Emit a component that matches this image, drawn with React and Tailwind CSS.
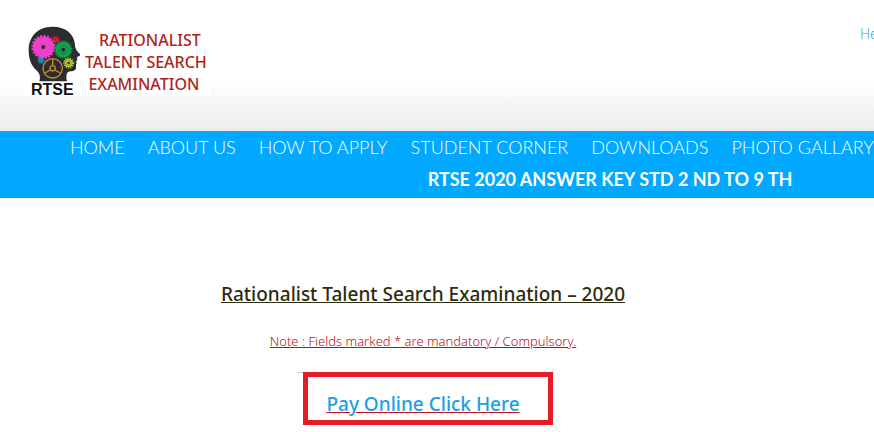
import clsx from 'clsx';

const navItems = [
  'HOME',
  'ABOUT US',
  'HOW TO APPLY',
  'STUDENT CORNER',
  'DOWNLOADS',
  'PHOTO GALLARY',
];

const Gear = ({ cx, cy, r, teeth, color, hole }) => {
  const toothLength = (2 * Math.PI * r) / (teeth * 2);
  return (
    <g>
      <circle cx={cx} cy={cy} r={r - 4} fill={color} />
      <circle
        cx={cx}
        cy={cy}
        r={r - 3}
        fill="none"
        stroke={color}
        strokeWidth="7"
        strokeDasharray={`${toothLength * ((r - 3) / r)}`}
      />
      <circle cx={cx} cy={cy} r={hole} fill="#2b2d31" />
    </g>
  );
};

const HeadLogo = () => (
  <svg viewBox="12 15 159 168" className="w-[53px] h-[56px]" aria-hidden="true">
    <path
      d="M46 181 C50 168 48 158 37 148 C20 132 14 112 14 88 C14 45 42 18 84 17 C126 16 151 40 153 72 C153 84 161 92 168 100 C170 104 164 107 159 108 L160 116 L156 121 L158 126 C154 131 158 138 155 145 C151 153 136 149 130 155 C125 162 127 172 129 181 Z"
      fill="#2b2d31"
    />
    <Gear cx={58} cy={78} r={36} teeth={20} color="#ee3fc8" hole={6} />
    <Gear cx={95} cy={56} r={11} teeth={9} color="#e3202b" hole={2} />
    <Gear cx={118} cy={86} r={27} teeth={24} color="#18a04b" hole={6} />
    <circle cx="118" cy="86" r="13" fill="none" stroke="#0c7836" strokeWidth="2" />
    <Gear cx={51} cy={118} r={10} teeth={8} color="#1f9fd0" hole={2} />
    <Gear cx={134} cy={126} r={16} teeth={13} color="#bfd02c" hole={4} />
    <circle cx="134" cy="126" r="8" fill="none" stroke="#7f8d1a" strokeWidth="2" />
    <g fill="none" stroke="#c98a22" strokeWidth="4">
      <circle cx="86" cy="142" r="29" fill="#2b2d31" />
      <circle cx="86" cy="142" r="8" />
      <path d="M86 134 V113 M79 147 L61 157 M93 147 L111 157" />
    </g>
  </svg>
);

const Header = () => (
  <header className="flex items-start justify-between bg-linear-to-b from-white from-60% to-[#ededed] pt-6 pl-6 pb-[35px]">
    <a href="#home" className="flex bg-white pl-1">
      <span className="flex flex-col pt-0.5">
        <HeadLogo />
        <span className="pl-[3px] pt-px font-['Liberation_Sans',sans-serif] text-base leading-[13px] font-bold text-[#111]">
          RTSE
        </span>
      </span>
      <span className="pt-[5px] px-1 text-center font-['Noto_Sans',sans-serif] text-base leading-[22px] font-medium text-[#b02418]">
        <span className="block pl-2">RATIONALIST</span>
        <span className="block">TALENT SEARCH</span>
        <span className="block pr-1">EXAMINATION</span>
      </span>
    </a>
    <a href="#help" className="w-3.5 shrink-0 overflow-hidden font-['Open_Sans',sans-serif] text-sm font-light text-[#1a9be0]">
      Help
    </a>
  </header>
);

const Nav = () => (
  <nav className="overflow-hidden bg-[#00a8ff] font-['Lato',sans-serif] text-lg leading-8 text-white">
    <ul className="flex gap-[23px] pl-[70px] whitespace-nowrap">
      {navItems.map((item) => (
        <li key={item}>
          <a href="#menu" className="font-light">{item}</a>
        </li>
      ))}
    </ul>
    <a href="#answer-key" className="block pl-[346px] pb-[3px] text-center font-bold">
      RTSE 2020 ANSWER KEY STD 2 ND TO 9 TH
    </a>
  </nav>
);

const Title = ({ as: Tag = 'h1', className, children }) => (
  <Tag className={clsx('text-[19px] leading-7 font-medium', className)}>{children}</Tag>
);

export default function App() {
  return (
    <div className="overflow-hidden bg-white">
      <Header />
      <Nav />
      <main className="flex flex-col items-center pt-[82px] pr-7 font-['Noto_Sans',sans-serif]">
        <Title className="text-[#2b2d0c] underline">Rationalist Talent Search Examination – 2020</Title>
        <p className="pt-[23px] text-[13px] leading-5 font-light text-[#b80f1a] underline">
          Note : Fields marked * are mandatory / Compulsory.
        </p>
        <div className="mt-[21px] flex items-start pl-1">
          <span className="w-1.5 border-t border-[#ccc]" />
          <div className="border-5 border-[#e51c25] pt-[13px] pr-7 pb-0.5 pl-[18px]">
            <Title as="p">
              <a href="#pay" className="text-[#1a9fe6] underline decoration-[#c01018]">Pay Online Click Here</a>
            </Title>
          </div>
        </div>
      </main>
    </div>
  );
}
